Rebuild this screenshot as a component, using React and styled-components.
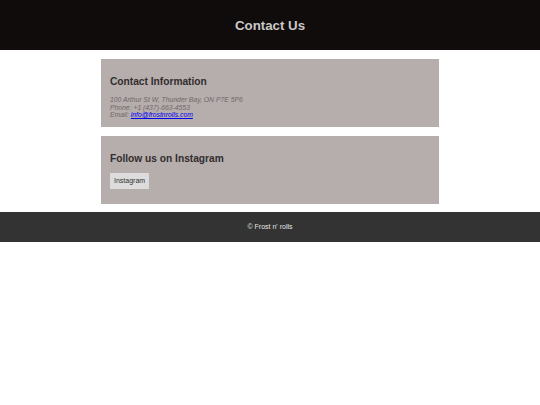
import React from "react";
import styled, { createGlobalStyle } from "styled-components";

const Global = createGlobalStyle`
  html, body { margin: 0; padding: 0; background: #ffffff; }
  body { font-family: "Liberation Sans", Arial, sans-serif; }
`;

const Header = styled.header`
  height: 50px;
  background: #110c0c;
  display: flex;
  align-items: center;
  justify-content: center;
`;

const Title = styled.h1`
  margin: 0;
  font-size: 13.3px;
  font-weight: 700;
  color: #cbc8c8;
`;

const Main = styled.main`
  width: 338px;
  margin: 0 auto;
  padding: 9px 0 8px;
  display: flex;
  flex-direction: column;
  gap: 9px;
`;

const Card = styled.section`
  background: #b6adad;
  padding: 10px 9px ${(p) => p.$bottom}px;
  display: flex;
  flex-direction: column;
  align-items: flex-start;
`;

const CardTitle = styled.h2`
  margin: 6px 0 8px;
  font-size: 10.2px;
  line-height: 13px;
  font-weight: 700;
  color: #312d2d;
`;

const Address = styled.address`
  font-size: 6.8px;
  line-height: 7.5px;
  color: #6e6868;
  font-style: italic;
`;

const Mail = styled.a`
  color: #0000ee;
  text-decoration: underline;
`;

const Button = styled.a`
  display: flex;
  align-items: center;
  height: 16px;
  padding: 0 4px;
  background: #dddcdc;
  color: #333;
  font-size: 7px;
  text-decoration: none;
`;

const Footer = styled.footer`
  height: 30px;
  background: #333333;
  display: flex;
  align-items: center;
  justify-content: center;
  color: #e6e6e6;
  font-size: 7px;
`;

export default function App() {
  return (
    <>
      <Global />
      <Header>
        <Title>Contact Us</Title>
      </Header>
      <Main>
        <Card $bottom={8}>
          <CardTitle>Contact Information</CardTitle>
          <Address>
            100 Arthur St W, Thunder Bay, ON P7E 5P6
            <br />
            Phone: +1 (437)-663-4553
            <br />
            Email: <Mail href="#">info@frostnrolls.com</Mail>
          </Address>
        </Card>
        <Card $bottom={15}>
          <CardTitle>Follow us on Instagram</CardTitle>
          <Button href="#">Instagram</Button>
        </Card>
      </Main>
      <Footer>© Frost n' rolls</Footer>
    </>
  );
}
